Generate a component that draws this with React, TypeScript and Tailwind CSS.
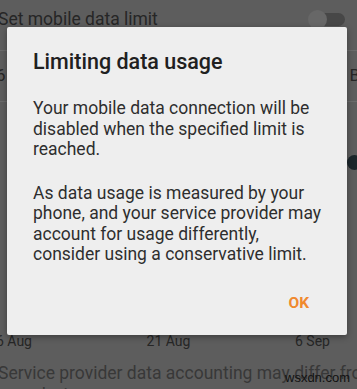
import React from "react";

export default function App() {
  return (
    <div
      className="relative w-[357px] h-[389px] overflow-hidden bg-[#5d5d5d]"
      style={{ fontFamily: "Roboto, 'Noto Sans', sans-serif" }}
    >
      {/* Background settings screen (dimmed) */}
      <div className="flex flex-col">
        <div className="flex h-[50px] items-start justify-between pt-[7px]">
          <span className="-ml-[2px] text-[17.5px] leading-[24px] text-[#262626]">
            Set mobile data limit
          </span>
          <div className="relative mr-[12px] mt-[3px] h-[18px] w-[37px]">
            <div className="absolute right-0 top-[3px] h-[13px] w-[30px] rounded-full bg-[#474747]" />
            <div className="absolute left-0 top-0 h-[19px] w-[19px] rounded-full bg-[#676767]" />
          </div>
        </div>
        <div className="h-px bg-[#6b6b6b]" />
        <div className="flex h-[50px] items-center justify-between">
          <span className="-ml-[4px] text-[17px] text-[#262626]">6</span>
          <span className="mr-[-3px] text-[17px] text-[#262626]">B</span>
        </div>
        <div className="h-px bg-[#6b6b6b]" />
        <div className="flex h-[228px] flex-col items-end">
          <div className="-mr-[5px] mt-[53px] h-[15px] w-[15px] rounded-full bg-[#1c262b]" />
        </div>
        <div className="flex h-[22px] items-center justify-between pr-[27px] text-[14px] text-[#262626]">
          <span className="-ml-[4px]">6 Aug</span>
          <span className="ml-[10px]">21 Aug</span>
          <span>6 Sep</span>
        </div>
        <div className="mt-[10px] -ml-[2px] w-[380px] text-[17.5px] leading-[22px] text-[#383838]">
          Service provider data accounting may differ from your device.
        </div>
      </div>

      {/* Watermark */}
      <div
        className="absolute left-[285px] top-[370px] text-[13px] leading-[16px] text-[#111]"
        style={{ fontFamily: "'Liberation Sans', Arial, sans-serif" }}
      >
        wsxdn.com
      </div>

      {/* Dialog */}
      <div className="absolute left-[7px] top-[27px] flex h-[308px] w-[340px] flex-col rounded-[2px] bg-[#eeeeee] shadow-[0_2px_6px_rgba(0,0,0,0.35)]">
        <div className="pl-[26px] pt-[21px] text-[21.5px] font-medium leading-[28px] text-[#202020]">
          Limiting data usage
        </div>
        <div className="mt-[22px] pl-[26px] pr-[20px] text-[17.5px] leading-[20.5px] text-[#2e2e2e]">
          <p>Your mobile data connection will be disabled when the specified limit is reached.</p>
          <p className="mt-[23px]">
            As data usage is measured by your phone, and your service provider may account for usage differently,
            consider using a conservative limit.
          </p>
        </div>
        <div className="mt-[28px] flex justify-end pr-[38px]">
          <span className="text-[15.5px] font-bold leading-[20px] text-[#f0892e]">OK</span>
        </div>
      </div>
    </div>
  );
}
